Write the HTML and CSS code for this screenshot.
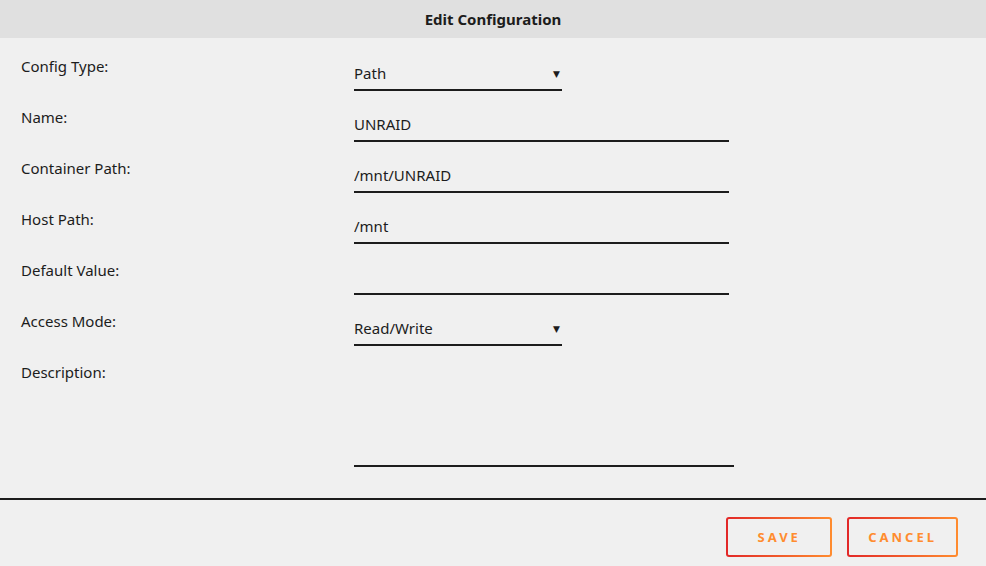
FILE: index.html
```html
<!DOCTYPE html>
<html lang="en">
<head>
  <meta charset="UTF-8" />
  <title>Edit Configuration</title>
  <link rel="stylesheet" href="styles.css">
</head>
<body>
  <div class="title">Edit Configuration</div>

  <form class="form">
    <div class="row">
      <label>Config Type:</label>
      <div class="select-wrap">
        <select class="select">
          <option>Path</option>
          <option>Port</option>
          <option>Variable</option>
          <option>Label</option>
          <option>Device</option>
        </select>
      </div>
    </div>

    <div class="row">
      <label>Name:</label>
      <input class="text" type="text" value="UNRAID" />
    </div>

    <div class="row">
      <label>Container Path:</label>
      <input class="text" type="text" value="/mnt/UNRAID" />
    </div>

    <div class="row">
      <label>Host Path:</label>
      <input class="text" type="text" value="/mnt" />
    </div>

    <div class="row">
      <label>Default Value:</label>
      <input class="text" type="text" value="" />
    </div>

    <div class="row">
      <label>Access Mode:</label>
      <div class="select-wrap">
        <select class="select">
          <option>Read/Write</option>
          <option>Read Only</option>
        </select>
      </div>
    </div>

    <div class="row">
      <label>Description:</label>
      <textarea class="desc"></textarea>
    </div>
  </form>

  <div class="actions">
    <button class="btn">Save</button>
    <button class="btn">Cancel</button>
  </div>
</body>
</html>
```

FILE: styles.css
```css
body {
  margin: 0;
  background: #f0f0f0;
  color: #1c1c1c;
  font-family: "Noto Sans", "DejaVu Sans", sans-serif;
  font-size: 15px;
}
.title {
  height: 38px;
  line-height: 38px;
  background: #e0e0e0;
  text-align: center;
  font-weight: bold;
  font-size: 15px;
}
.form {
  padding: 18px 21px 31px;
  border-bottom: 2px solid #1c1c1c;
}
.row {
  display: grid;
  grid-template-columns: 333px 1fr;
  align-items: start;
  margin-bottom: 16px;
}
.row:last-child {
  margin-bottom: 0;
}
.row label {
  line-height: 20px;
}
.text,
.select,
.desc {
  font: inherit;
  color: inherit;
  background: transparent;
  border: none;
  border-bottom: 2px solid #1c1c1c;
  padding: 0;
  height: 35px;
  outline: none;
  box-sizing: border-box;
  border-radius: 0;
}
.text {
  width: 375px;
}
.select-wrap {
  position: relative;
  width: 208px;
}
.select {
  appearance: none;
  -webkit-appearance: none;
  width: 208px;
}
.select-wrap::after {
  content: "\25BC";
  position: absolute;
  right: 2px;
  top: 11px;
  font-size: 9px;
  pointer-events: none;
}
.desc {
  width: 380px;
  height: 105px;
  resize: none;
  display: block;
}
.actions {
  display: flex;
  justify-content: flex-end;
  gap: 15px;
  padding: 17px 28px 0;
}
.btn {
  height: 40px;
  padding: 0 19px;
  min-width: 106px;
  border: 2px solid transparent;
  border-radius: 3px;
  background: linear-gradient(#f0f0f0, #f0f0f0) padding-box,
              linear-gradient(90deg, #e22828, #ff8c2f) border-box;
  color: #ff8c2f;
  font-family: inherit;
  font-size: 13px;
  font-weight: bold;
  letter-spacing: 3px;
  text-transform: uppercase;
  cursor: pointer;
}
```
